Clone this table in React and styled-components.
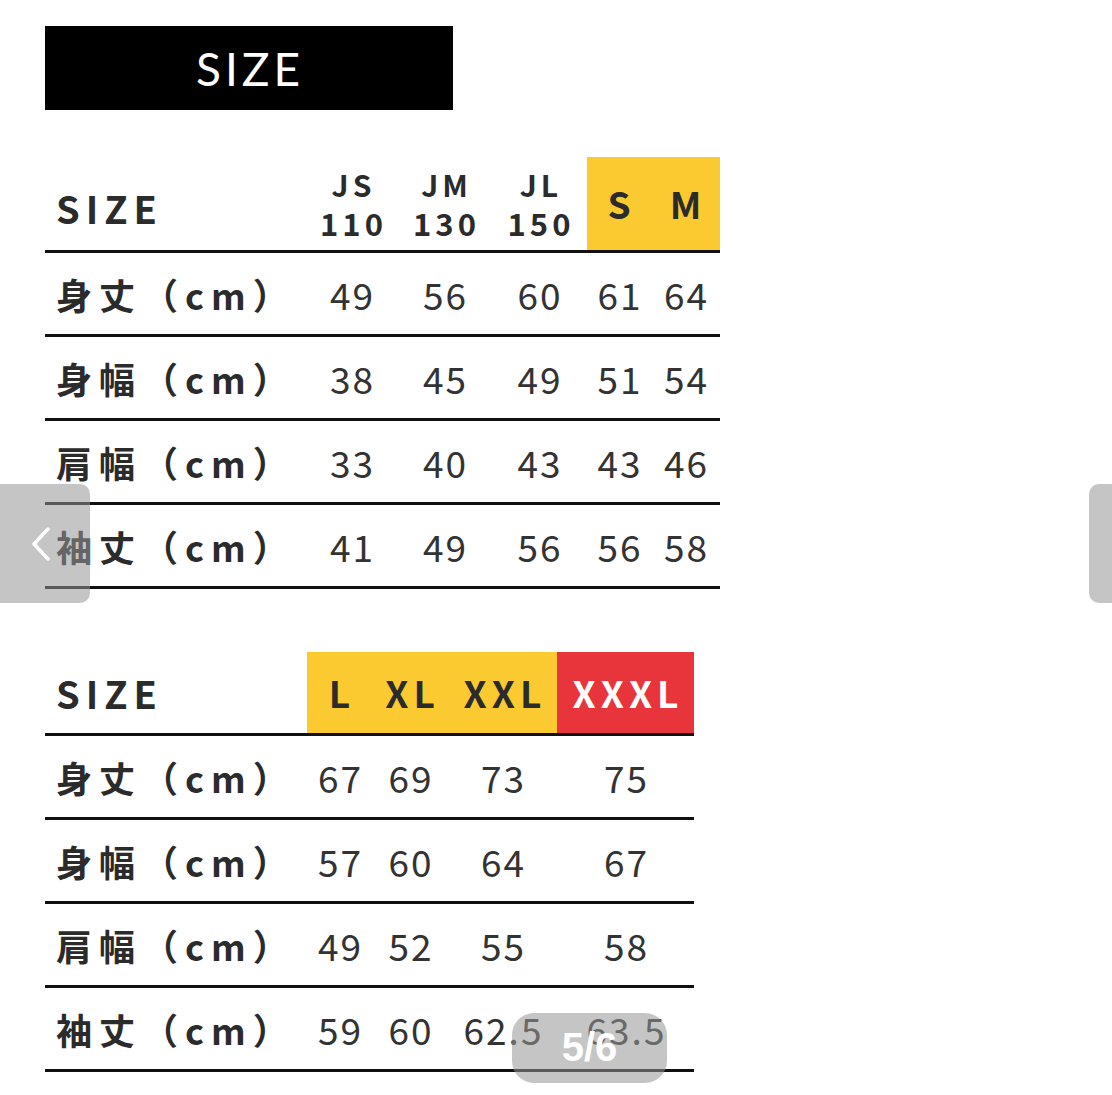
import React from "react";
import styled, { createGlobalStyle } from "styled-components";

const GlobalStyle = createGlobalStyle`
  html, body {
    margin: 0;
    padding: 0;
    background: #ffffff;
  }
  body {
    font-family: "Noto Sans CJK JP", "Noto Sans", sans-serif;
    color: #2b2b2b;
  }
`;

const Page = styled.div`
  position: relative;
  width: 1112px;
  height: 1095px;
  overflow: hidden;
  padding: 26px 0 0 45px;
  box-sizing: border-box;
  background: #fff;
`;

const Banner = styled.div`
  width: 408px;
  height: 84px;
  background: #000;
  color: #fff;
  display: flex;
  align-items: center;
  justify-content: center;
  font-family: "Lato", "Liberation Sans", sans-serif;
  font-weight: 400;
  font-size: 46px;
  letter-spacing: 4px;
  padding-left: 2px;
  box-sizing: border-box;
`;

const Table = styled.div`
  width: ${(p) => p.$width}px;
  margin-top: ${(p) => p.$top}px;
`;

const Row = styled.div`
  display: grid;
  grid-template-columns: ${(p) => p.$cols};
  height: ${(p) => p.$height}px;
  border-bottom: 3px solid #111;
`;

const LabelCell = styled.div`
  display: flex;
  align-items: center;
  padding-left: 11px;
  font-size: 36px;
  font-weight: 700;
  letter-spacing: 7px;
  color: #2b2b2b;
  white-space: nowrap;
`;

const HeadLabel = styled(LabelCell)`
  font-size: 38px;
  letter-spacing: 6px;
  padding-top: ${(p) => p.$shift || 0}px;
`;

const HeadCell = styled.div`
  display: flex;
  flex-direction: column;
  align-items: center;
  justify-content: center;
  gap: 8px;
  background: ${(p) => p.$bg || "transparent"};
  color: ${(p) => p.$color || "#2b2b2b"};
  font-weight: 700;
  font-size: ${(p) => p.$size || 38}px;
  letter-spacing: ${(p) => p.$spacing || 4}px;
  line-height: 1;
  padding-left: ${(p) => p.$spacing || 4}px;
  box-sizing: border-box;
  white-space: nowrap;
`;

const HeadSub = styled.span`
  font-size: 31px;
  display: block;
`;

const ValueCell = styled.div`
  display: flex;
  align-items: center;
  justify-content: center;
  font-size: 37px;
  font-weight: 400;
  letter-spacing: 2px;
  padding-left: 2px;
  color: #333;
  white-space: nowrap;
`;

const SideNav = styled.div`
  position: absolute;
  top: 484px;
  width: ${(p) => p.$width}px;
  height: 119px;
  background: rgba(150, 150, 150, 0.55);
  ${(p) =>
    p.$side === "left"
      ? "left: 0; border-radius: 0 10px 10px 0;"
      : "right: 0; border-radius: 10px 0 0 10px;"}
  display: flex;
  align-items: center;
  padding-left: ${(p) => (p.$side === "left" ? 31 : 0)}px;
  box-sizing: border-box;
`;

const Counter = styled.div`
  position: absolute;
  left: 512px;
  top: 1013px;
  width: 155px;
  height: 70px;
  border-radius: 22px;
  background: rgba(150, 150, 150, 0.55);
  color: #fff;
  font-family: "Liberation Sans", Arial, sans-serif;
  font-weight: 700;
  font-size: 40px;
  display: flex;
  align-items: center;
  justify-content: center;
  padding-bottom: 2px;
  box-sizing: border-box;
`;

const YELLOW = "#fbc930";
const RED = "#e8353b";

const topCols = "260px 93px 93px 96px 64px 69px";
const bottomCols = "262px 65px 76px 109px 137px";

const topRows = [
  ["身丈（cm）", "49", "56", "60", "61", "64"],
  ["身幅（cm）", "38", "45", "49", "51", "54"],
  ["肩幅（cm）", "33", "40", "43", "43", "46"],
  ["袖丈（cm）", "41", "49", "56", "56", "58"],
];

const bottomRows = [
  ["身丈（cm）", "67", "69", "73", "75"],
  ["身幅（cm）", "57", "60", "64", "67"],
  ["肩幅（cm）", "49", "52", "55", "58"],
  ["袖丈（cm）", "59", "60", "62.5", "63.5"],
];

const Chevron = () => (
  <svg width="20" height="34" viewBox="0 0 20 34" fill="none">
    <path d="M17 2 L3 17 L17 32" stroke="#fff" strokeWidth="3.5" strokeLinecap="round" strokeLinejoin="round" />
  </svg>
);

export default function App() {
  return (
    <>
      <GlobalStyle />
      <Page>
        <Banner>SIZE</Banner>

        <Table $width={675} $top={47}>
          <Row $cols={topCols} $height={93}>
            <HeadLabel $shift={8}>SIZE</HeadLabel>
            {[
              ["JS", "110"],
              ["JM", "130"],
              ["JL", "150"],
            ].map(([a, b]) => (
              <HeadCell key={a} $size={30} $spacing={4}>
                <span>{a}</span>
                <HeadSub>{b}</HeadSub>
              </HeadCell>
            ))}
            <HeadCell $bg={YELLOW} $size={37}>S</HeadCell>
            <HeadCell $bg={YELLOW} $size={37}>M</HeadCell>
          </Row>
          {topRows.map((r) => (
            <Row key={r[0]} $cols={topCols} $height={81}>
              <LabelCell>{r[0]}</LabelCell>
              {r.slice(1).map((v, i) => (
                <ValueCell key={i}>{v}</ValueCell>
              ))}
            </Row>
          ))}
        </Table>

        <Table $width={649} $top={63}>
          <Row $cols={bottomCols} $height={81}>
            <HeadLabel>SIZE</HeadLabel>
            <HeadCell $bg={YELLOW} $size={37} $spacing={5}>L</HeadCell>
            <HeadCell $bg={YELLOW} $size={37} $spacing={5}>XL</HeadCell>
            <HeadCell $bg={YELLOW} $size={37} $spacing={5}>XXL</HeadCell>
            <HeadCell $bg={RED} $color="#fff" $size={37} $spacing={5}>XXXL</HeadCell>
          </Row>
          {bottomRows.map((r) => (
            <Row key={r[0]} $cols={bottomCols} $height={81}>
              <LabelCell>{r[0]}</LabelCell>
              {r.slice(1).map((v, i) => (
                <ValueCell key={i}>{v}</ValueCell>
              ))}
            </Row>
          ))}
        </Table>

        <SideNav $side="left" $width={90}>
          <Chevron />
        </SideNav>
        <SideNav $side="right" $width={23} />
        <Counter>5/6</Counter>
      </Page>
    </>
  );
}
